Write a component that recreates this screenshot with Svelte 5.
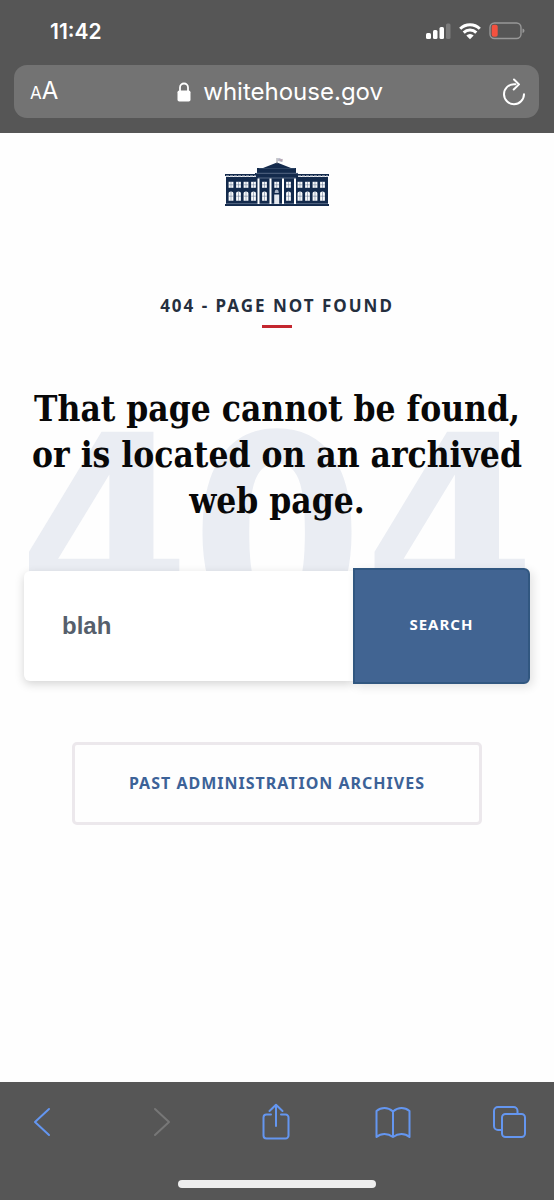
<script>
  let query = $state('blah');
  const wings = [14, 21.5, 29, 36.5, 83, 90.5, 98, 105.5];
  const bays = [47.5, 71.5];
  const columns = [41.5, 53.5, 66, 78];
</script>

<div class="screen">
  <header class="browser">
    <div class="status">
      <span class="time">11:42</span>
      <div class="indicators">
        <svg width="26" height="17" viewBox="0 0 26 17" aria-hidden="true">
          <rect x="1" y="10" width="5" height="6" rx="1.5" fill="#fff" />
          <rect x="8" y="7" width="4.500" height="9" rx="1.5" fill="#fff" />
          <rect x="14.500" y="4" width="4.500" height="12" rx="1.5" fill="#fff" />
          <rect x="21" y="0.500" width="4.500" height="15.500" rx="1.5" fill="#7b7b7b" />
        </svg>
        <svg width="22" height="17" viewBox="0 0 22 17" aria-hidden="true">
          <g fill="none" stroke="#fff" stroke-width="3">
            <path d="M1.200 5.800a14 14 0 0 1 19.600 0" />
            <path d="M4.700 9.600a9 9 0 0 1 12.600 0" />
          </g>
          <path d="M7.300 12.400a5.300 5.300 0 0 1 7.400 0L11 16.300z" fill="#fff" />
        </svg>
        <svg width="36" height="18" viewBox="0 0 36 18" aria-hidden="true">
          <rect x="1" y="1" width="31" height="15.500" rx="4.500" fill="none" stroke="#989898" stroke-width="1.400" />
          <rect x="2.700" y="2.700" width="6" height="12" rx="2" fill="#f4513f" />
          <path d="M33.500 6.500q2 .6 2 2.300t-2 2.300z" fill="#989898" />
        </svg>
      </div>
    </div>
    <div class="address">
      <button class="text-size" aria-label="Text size"><small>A</small>A</button>
      <div class="site">
        <svg width="14" height="20" viewBox="0 0 14 20" aria-hidden="true">
          <rect x="0.500" y="8.500" width="13" height="11" rx="1.800" fill="#fff" />
          <path d="M3 9V5.500a4 4 0 0 1 8 0V9" fill="none" stroke="#fff" stroke-width="1.800" />
        </svg>
        <span>whitehouse.gov</span>
      </div>
      <button class="reload" aria-label="Reload">
        <svg width="24" height="28" viewBox="0 0 24 28" fill="none" stroke="#fff" stroke-width="2" stroke-linecap="round" stroke-linejoin="round">
          <path d="M13.500 6.200H12a10 10 0 1 0 10 10M12 1.500l5 4.900-5.300 5.100" />
        </svg>
      </button>
    </div>
  </header>

  <main>
    <a class="logo" href="#home" aria-label="The White House">
      <svg width="104" height="50" viewBox="8 6 104 50">
        <g fill="#132a4c">
          <path d="M38 31V22h2v-5h6l14-5.500L74 17h5v5h2v9z" />
          <path d="M9 26h102v27H9z" />
          <path d="M8 23h31v2H8zM81 23h31v2H81z" />
          <path d="M8 53h104v2H8z" />
        </g>
        <path d="M9 25.300h30M81 25.300h30" stroke="#d5dae3" stroke-width="1.400" stroke-dasharray="3 1" />
        <path d="M39 22.300h42M41 27h38M9 52.600h102" stroke="#8190a8" stroke-width=".6" />
        <path d="M42 17.500h36" stroke="#405574" stroke-width=".6" />
        <path d="M60 7v6" stroke="#777" stroke-width=".7" />
        <path d="M60.400 7.500q2-.8 3 0t2.200.2v3q-1.500.6-2.700-.2t-2.500 0z" fill="#b9bccb" />
        <path d="M62.500 8.800q1.500.8 3.100.1" stroke="#b77882" stroke-width=".6" fill="none" />
        {#each columns as x}
          <path d="M{x - 1} 27.500h2V53h-2z" fill="#fff" />
        {/each}
        {#each [...wings, ...bays, 59.700] as x}
          <path d="M{x - 2.400} 30.800h4.800v6h-4.800z" fill="#f8fafc" />
          <path d="M{x} 30.800v6M{x - 2.400} 33.800h4.800" stroke="#5b6d88" stroke-width=".5" />
        {/each}
        {#each [...wings, ...bays] as x}
          <path d="M{x - 2.400} 49.800V42q0-1.500 2.400-1.500t2.400 1.500v7.800z" fill="#f8fafc" />
          <path d="M{x} 40.500v9.300M{x - 2.400} 45.200h4.800" stroke="#5b6d88" stroke-width=".5" />
        {/each}
        <path d="M57.700 42v-1q0-2.500 2-2.500t2 2.500v1z" fill="#abb5c5" />
        <path d="M57.200 43.500h5V53h-5z" fill="#e4e8ee" />
      </svg>
    </a>

    <p class="eyebrow">404 - Page Not Found</p>

    <section class="message">
      <span class="watermark" aria-hidden="true">404</span>
      <h1>That page cannot be found, or is located on an archived web page.</h1>
      <form onsubmit={(e) => e.preventDefault()}>
        <input type="text" aria-label="Search" bind:value={query} />
        <button type="submit">Search</button>
      </form>
    </section>

    <a class="archives" href="#archives">Past Administration Archives</a>
  </main>

  <footer>
    <nav aria-label="Browser">
      <button aria-label="Back">
        <svg width="34" height="36" viewBox="0 0 34 36"><path d="M24 5 10 18l14 13" /></svg>
      </button>
      <button aria-label="Forward" disabled>
        <svg width="34" height="36" viewBox="0 0 34 36"><path d="M13 5l14 13-14 13" /></svg>
      </button>
      <button aria-label="Share">
        <svg width="34" height="36" viewBox="0 0 34 36"><path d="M12 10.500H7.500a3 3 0 0 0-3 3v18a3 3 0 0 0 3 3h19a3 3 0 0 0 3-3v-18a3 3 0 0 0-3-3H22M17 22V1M10.500 7 17 .8 23.500 7" /></svg>
      </button>
      <button aria-label="Bookmarks">
        <svg width="34" height="36" viewBox="0 0 34 36"><path d="M17 7.500Q13 4 8.500 4T.5 7v26q3.500-3 8-3t8.500 3q4-3 8.500-3t8 3V7q-3.500-3-8-3T17 7.500zV33" /></svg>
      </button>
      <button aria-label="Tabs">
        <svg width="34" height="36" viewBox="0 0 34 36"><rect x="9" y="10" width="23" height="23" rx="3.500" /><path d="M9 26H5a4 4 0 0 1-4-4V7a4 4 0 0 1 4-4h15.500a4 4 0 0 1 4 4v3" /></svg>
      </button>
    </nav>
    <div class="home-bar"></div>
  </footer>
</div>

<style>
  :global(body) {
    margin: 0;
    background: #fefefe;
  }
  .screen {
    display: flex;
    flex-direction: column;
    min-height: 100vh;
    font-family: "Noto Sans", sans-serif;
  }
  button {
    border: 0;
    padding: 0;
    background: none;
    color: inherit;
    font: inherit;
  }
  svg {
    display: block;
    overflow: visible;
  }
  .browser {
    box-sizing: border-box;
    padding: 16px 15px 15px 14px;
    background: #565656;
    color: #fff;
    font-family: Inter, sans-serif;
  }
  .status {
    display: flex;
    justify-content: space-between;
    align-items: center;
    height: 30px;
    padding: 0 14px 0 36px;
    margin-bottom: 19px;
  }
  .time {
    font-size: 21px;
    font-weight: 600;
  }
  .indicators {
    display: flex;
    align-items: center;
    gap: 8px;
  }
  .address {
    display: flex;
    align-items: center;
    justify-content: space-between;
    height: 53px;
    padding: 0 13px 0 16px;
    border-radius: 13px;
    background: #737373;
  }
  .text-size {
    font-size: 24px;
    line-height: 32px;
  }
  .text-size small {
    font-size: 17px;
  }
  .site {
    display: flex;
    align-items: center;
    gap: 12px;
    font-size: 24px;
    line-height: 32px;
  }
  main {
    flex: 1;
    display: flex;
    flex-direction: column;
    align-items: center;
    padding: 24px 24px 48px;
  }
  .eyebrow {
    margin: 87px 0 0;
    color: #252f3e;
    font-size: 17px;
    font-weight: 700;
    line-height: 24px;
    letter-spacing: 2px;
    text-transform: uppercase;
  }
  .eyebrow::after {
    content: "";
    display: block;
    width: 30px;
    height: 3px;
    margin: 7px auto 0;
    background: #c4272f;
  }
  .message {
    position: relative;
    isolation: isolate;
    width: 100%;
    margin-top: 58px;
  }
  .watermark {
    position: absolute;
    z-index: -1;
    top: 44px;
    left: 50%;
    transform: translateX(-50%);
    color: #eaedf3;
    font-family: "DejaVu Sans Condensed", "Open Sans", sans-serif;
    font-size: 276px;
    font-weight: 700;
    line-height: 216px;
  }
  h1 {
    margin: 0;
    color: #080808;
    font-family: "DejaVu Serif Condensed", "Liberation Serif", serif;
    font-size: 35px;
    font-weight: 700;
    line-height: 46px;
    text-align: center;
  }
  form {
    display: flex;
    align-items: center;
    margin-top: 44px;
  }
  input {
    box-sizing: border-box;
    flex: 1;
    min-width: 0;
    height: 110px;
    padding: 0 38px;
    border: 0;
    border-radius: 6px 0 0 6px;
    background: #fff;
    box-shadow: 0 3px 10px #0000002b;
    color: #565f6c;
    font: 700 24px "Liberation Sans", sans-serif;
  }
  form button {
    position: relative;
    box-sizing: border-box;
    width: 35%;
    height: 116px;
    padding-bottom: 4px;
    border: 2px solid #315780;
    border-radius: 0 6px 6px 0;
    background: #416492;
    box-shadow: 3px 3px 10px #0000001c;
    color: #fff;
    font-size: 15px;
    font-weight: 700;
    letter-spacing: 1px;
    text-transform: uppercase;
  }
  .archives {
    box-sizing: border-box;
    width: 81%;
    margin-top: 58px;
    padding: 27px 12px;
    border: 3px solid #ece8ec;
    border-radius: 5px;
    color: #3c6298;
    font-size: 16px;
    font-weight: 700;
    line-height: 23px;
    letter-spacing: 1px;
    text-align: center;
    text-decoration: none;
    text-transform: uppercase;
  }
  footer {
    padding: 22px 0 12px;
    background: #565656;
  }
  nav {
    display: flex;
    justify-content: space-between;
    padding: 0 27px 0 25px;
  }
  nav button {
    color: #6496f0;
  }
  nav button:disabled {
    color: #777;
  }
  nav svg {
    fill: none;
    stroke: currentColor;
    stroke-width: 2;
    stroke-linecap: round;
    stroke-linejoin: round;
  }
  .home-bar {
    width: 198px;
    height: 8px;
    margin: 40px auto 0;
    border-radius: 4px;
    background: #eee;
  }
</style>
